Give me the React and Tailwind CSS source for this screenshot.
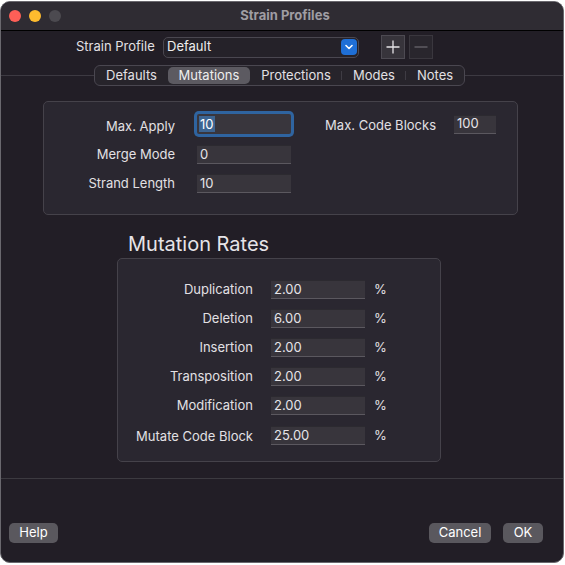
import React from "react";

const font = { fontFamily: "Inter, 'Liberation Sans', sans-serif" };

function Field({ value, width = "w-[94px]", focused = false }) {
  if (focused) {
    return (
      <div className={`${width} h-[20px] bg-[#39363d] rounded-[2px] ring-[3px] ring-[#2f64a0] flex items-center pl-[2px]`}>
        <span className="bg-[#3d6592] text-white text-[13px] leading-[16px] px-[1px]">{value}</span>
      </div>
    );
  }
  return (
    <div className={`${width} h-[19px] bg-[#38353c] border-t border-[#2c2a30] border-b border-b-[#5b585f] flex items-center pl-[3px] text-[13px] text-[#e6e4e8]`}>
      {value}
    </div>
  );
}

function Tab({ label, width, selected, sep }) {
  return (
    <div className={`${width} h-full flex items-center justify-center relative`}>
      {selected ? (
        <div className="absolute inset-y-[1px] inset-x-0 bg-[#5c5a61] rounded-[5px]" />
      ) : null}
      <span className={`relative text-[13px] ${selected ? "text-[#eeeeee]" : "text-[#e2e0e4]"}`}>{label}</span>
      {sep ? <div className="absolute right-0 top-[5px] bottom-[5px] w-px bg-[#3f3c44]" /> : null}
    </div>
  );
}

const rates = [
  ["Duplication", "2.00"],
  ["Deletion", "6.00"],
  ["Insertion", "2.00"],
  ["Transposition", "2.00"],
  ["Modification", "2.00"],
  ["Mutate Code Block", "25.00"],
];

export default function App() {
  return (
    <div className="w-[565px] h-[565px] bg-white pt-[1px]" style={font}>
      <div className="w-[564px] h-[562px] rounded-[10px] overflow-hidden border border-[#6a686e] bg-[#221e26] flex flex-col">
        {/* Title bar */}
        <div className="h-[29px] bg-[#2f2c33] border-b border-black flex items-center relative shrink-0">
          <div className="flex items-center gap-[8px] pl-[8px]">
            <div className="w-[12px] h-[12px] rounded-full bg-[#fe5f57]" />
            <div className="w-[12px] h-[12px] rounded-full bg-[#febb2e]" />
            <div className="w-[12px] h-[12px] rounded-full bg-[#4c4a50]" />
          </div>
          <div className="flex-1 text-center text-[13px] font-bold text-[#9f9da3] pr-[54px]">Strain Profiles</div>
        </div>

        {/* Profile row */}
        <div className="flex items-center pt-[4px] pl-[75px] h-[28px] shrink-0">
          <span className="text-[13px] text-[#e2e0e4] w-[79px]">Strain Profile</span>
          <div className="ml-[8px] w-[196px] h-[21px] rounded-[5px] border border-[#4a4750] bg-[#252229] flex items-center justify-between pl-[3px] pr-[1px]">
            <span className="text-[13px] text-[#eeeeee]">Default</span>
            <div className="w-[16px] h-[16px] rounded-[4px] bg-[#1f6fd6] flex items-center justify-center">
              <svg width="8" height="6" viewBox="0 0 8 6">
                <path d="M1 1.5 L4 4.5 L7 1.5" stroke="white" strokeWidth="1.6" fill="none" strokeLinecap="round" strokeLinejoin="round" />
              </svg>
            </div>
          </div>
          <div className="ml-[22px] w-[24px] h-[24px] bg-[#37343b] border border-[#4d4a52] flex items-center justify-center">
            <svg width="14" height="14" viewBox="0 0 14 14">
              <path d="M7 0.5 V13.5 M0.5 7 H13.5" stroke="#e6e4e8" strokeWidth="1.3" />
            </svg>
          </div>
          <div className="ml-[4px] w-[24px] h-[24px] bg-[#29262d] border border-[#3a373e] flex items-center justify-center">
            <svg width="14" height="14" viewBox="0 0 14 14">
              <path d="M0.5 7 H13.5" stroke="#5f5d63" strokeWidth="1.3" />
            </svg>
          </div>
        </div>

        {/* Tabs */}
        <div className="flex items-center mt-[6px] h-[21px] shrink-0">
          <div className="w-[93px] h-px bg-[#3d3a42]" />
          <div className="flex h-full border border-[#4a4750] rounded-[6px] bg-[#27242b]">
            <Tab label="Defaults" width="w-[73px]" />
            <Tab label="Mutations" width="w-[82px]" selected />
            <Tab label="Protections" width="w-[92px]" sep />
            <Tab label="Modes" width="w-[64px]" sep />
            <Tab label="Notes" width="w-[58px]" />
          </div>
          <div className="flex-1 h-px bg-[#3d3a42]" />
        </div>

        {/* Top group */}
        <div className="ml-[42px] mt-[15px] w-[475px] h-[114px] shrink-0 rounded-[5px] border border-[#45424a] bg-[#2a2730] pt-[12px] text-[13px] text-[#e2e0e4]">
          <div className="flex items-center h-[20px]">
            <span className="w-[131px] text-right pt-[5px]">Max. Apply</span>
            <div className="ml-[22px]">
              <Field value="10" focused />
            </div>
            <span className="w-[145px] text-right pt-[4px]">Max. Code Blocks</span>
            <div className="ml-[18px]">
              <Field value="100" width="w-[42px]" />
            </div>
          </div>
          <div className="flex items-center h-[19px] mt-[11px]">
            <span className="w-[131px] text-right">Merge Mode</span>
            <div className="ml-[22px]">
              <Field value="0" />
            </div>
          </div>
          <div className="flex items-center h-[19px] mt-[10px]">
            <span className="w-[131px] text-right">Strand Length</span>
            <div className="ml-[22px]">
              <Field value="10" />
            </div>
          </div>
        </div>

        {/* Mutation Rates */}
        <div className="ml-[127px] mt-[15px] h-[28px] text-[20px] leading-[28px] text-[#e6e4e8] shrink-0">Mutation Rates</div>
        <div className="ml-[116px] w-[324px] h-[204px] shrink-0 rounded-[5px] border border-[#45424a] bg-[#2a2730] pt-[21px] flex flex-col gap-[10px] text-[13px] text-[#e2e0e4]">
          {rates.map(([label, value], i) => (
            <div key={label} className={`flex items-center h-[19px] ${i === 5 ? "mt-[1px]" : ""}`}>
              <span className={`w-[135px] text-right ${i === 5 ? "pt-[3px]" : ""}`}>{label}</span>
              <div className="ml-[18px]">
                <Field value={value} />
              </div>
              <span className="ml-[9px]">%</span>
            </div>
          ))}
        </div>

        {/* Separator */}
        <div className="mt-[16px] h-px bg-[#3c3a40] shrink-0" />

        {/* Buttons */}
        <div className="mt-[44px] flex items-center px-[8px] shrink-0">
          <button className="w-[49px] h-[20px] rounded-[5px] bg-[#5a585e] text-[13px] text-white">Help</button>
          <div className="flex-1" />
          <button className="w-[62px] h-[20px] rounded-[5px] bg-[#5a585e] text-[13px] text-white">Cancel</button>
          <button className="ml-[12px] w-[40px] h-[20px] rounded-[5px] bg-[#5a585e] text-[13px] text-white">OK</button>
          <div className="w-[12px]" />
        </div>
      </div>
    </div>
  );
}
